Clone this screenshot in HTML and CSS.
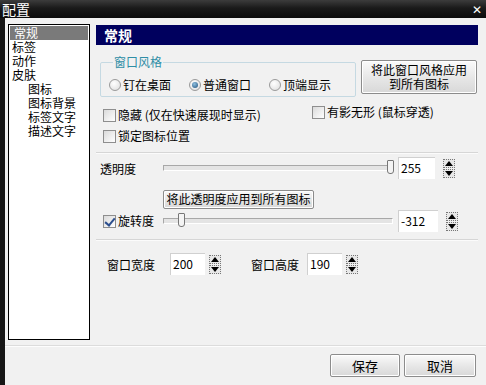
FILE: index.html
```html
<!DOCTYPE html>
<html lang="zh-CN">
<head>
  <meta charset="UTF-8">
  <title>配置</title>
  <link rel="stylesheet" href="styles.css">
</head>
<body>
<div class="window">
  <!-- 标题栏 -->
  <div class="titlebar">
    <span class="title">配置</span>
    <span class="close">✕</span>
  </div>
  <div class="frame">
    <div class="top">
      <!-- 左侧列表 -->
      <ul class="nav">
        <li class="active">常规</li>
        <li>标签</li>
        <li>动作</li>
        <li>皮肤</li>
        <li class="sub">图标</li>
        <li class="sub">图标背景</li>
        <li class="sub">标签文字</li>
        <li class="sub">描述文字</li>
      </ul>
      <!-- 右侧面板 -->
      <div class="panel">
        <div class="panel-head">常规</div>

        <div class="style-row">
          <fieldset class="group">
            <legend>窗口风格</legend>
            <label class="radio"><span class="dot"></span>钉在桌面</label>
            <label class="radio"><span class="dot on"></span>普通窗口</label>
            <label class="radio"><span class="dot"></span>顶端显示</label>
          </fieldset>
          <button class="btn btn-apply">将此窗口风格应用<br>到所有图标</button>
        </div>

        <div class="check-row">
          <div class="check-col">
            <label class="check"><span class="box"></span>隐藏 (仅在快速展现时显示)</label>
            <label class="check"><span class="box"></span>锁定图标位置</label>
          </div>
          <label class="check check-right"><span class="box"></span>有影无形 (鼠标穿透)</label>
        </div>

        <div class="sep"></div>

        <div class="slider-row">
          <span class="slider-label">透明度</span>
          <div class="track"><span class="thumb thumb-end"></span></div>
          <span class="edit">255</span>
          <span class="spin"><i class="up"></i><i class="down"></i></span>
        </div>

        <div class="apply-row">
          <button class="btn btn-alpha">将此透明度应用到所有图标</button>
        </div>

        <div class="slider-row slider-rotate">
          <label class="check slider-label"><span class="box checked"></span>旋转度</label>
          <div class="track"><span class="thumb thumb-start"></span></div>
          <span class="edit edit-wide">-312</span>
          <span class="spin"><i class="up"></i><i class="down"></i></span>
        </div>

        <div class="sep sep-lower"></div>

        <div class="size-row">
          <span class="size-label">窗口宽度</span>
          <span class="edit">200</span>
          <span class="spin"><i class="up"></i><i class="down"></i></span>
          <span class="size-label size-gap">窗口高度</span>
          <span class="edit">190</span>
          <span class="spin"><i class="up"></i><i class="down"></i></span>
        </div>
      </div>
    </div>

    <div class="footer-line"></div>
    <div class="footer">
      <button class="btn btn-foot">保存</button>
      <button class="btn btn-foot btn-cancel">取消</button>
    </div>
  </div>
</div>
</body>
</html>
```

FILE: styles.css
```css
:root {
  --bg: #f1f1f1;
  --navy: #00005e;
  --line: #d6d6d6;
  --teal: #2f8ea6;
  --dark: #161616;
}
* {
  box-sizing: border-box;
  font-family: "Noto Sans CJK SC", "DejaVu Sans", sans-serif;
}
body {
  margin: 0;
  background: var(--bg);
}
.window {
  width: 486px;
  height: 385px;
  background: var(--bg);
  overflow: hidden;
}
.titlebar {
  height: 18px;
  display: flex;
  align-items: center;
  justify-content: space-between;
  padding: 0 4px 0 2px;
  background: linear-gradient(#3c3c3c, #1a1a1a 45%, #0c0c0c);
  color: #fff;
}
.title {
  font-size: 14px;
  line-height: 18px;
}
.close {
  font-size: 12px;
  font-weight: bold;
  line-height: 18px;
}
.frame {
  height: 367px;
  border-left: 5px solid var(--dark);
  padding: 6px 8px 0 3px;
}
.top {
  display: flex;
  gap: 6px;
  height: 316px;
}

/* 左侧列表 */
.nav {
  list-style: none;
  margin: 0;
  padding: 1px;
  width: 82px;
  height: 316px;
  background: #fff;
  border: 1px solid #000;
}
.nav li {
  font-size: 12px;
  line-height: 14px;
  height: 14px;
  padding-left: 2px;
  color: #000;
}
.nav li.active {
  background: #7a7a7a;
  color: #fff;
  padding-left: 4px;
}
.nav li.sub {
  padding-left: 18px;
}

/* 右侧面板 */
.panel {
  width: 382px;
  margin-top: 1px;
}
.panel-head {
  height: 20px;
  background: var(--navy);
  color: #fff;
  font-size: 14px;
  font-weight: bold;
  line-height: 20px;
  padding-left: 8px;
}
.style-row {
  display: flex;
  align-items: flex-start;
  margin-top: 10px;
  padding-left: 4px;
}
.group {
  width: 256px;
  height: 42px;
  margin: 0;
  padding: 4px 0 0 8px;
  border: 1px solid #c5d9e2;
  border-radius: 2px;
  display: flex;
  align-items: center;
  gap: 18px;
}
.group legend {
  color: var(--teal);
  font-size: 12px;
  line-height: 14px;
  padding: 0 1px;
  margin-left: 4px;
}
.radio, .check {
  display: flex;
  align-items: center;
  gap: 2px;
  font-size: 12px;
  line-height: 14px;
  color: #000;
}
.dot {
  width: 12px;
  height: 12px;
  border-radius: 50%;
  border: 1px solid #9a9a9a;
  background: radial-gradient(circle at 40% 35%, #fff, #dcdcdc);
  position: relative;
}
.dot.on::after {
  content: "";
  position: absolute;
  left: 2px;
  top: 2px;
  width: 6px;
  height: 6px;
  border-radius: 50%;
  background: radial-gradient(circle at 40% 35%, #8fc0e0, #1d4f7a);
}
.btn {
  font-size: 12px;
  line-height: 14px;
  color: #000;
  background: linear-gradient(#fafafa, #e6e6e6 55%, #d8d8d8);
  border: 1px solid #8c8c8c;
  border-radius: 2px;
  box-shadow: inset 0 0 0 1px #fff;
  padding: 0;
}
.btn-apply {
  width: 116px;
  height: 34px;
  margin-left: 5px;
  margin-top: 5px;
}
.check-row {
  display: flex;
  align-items: flex-start;
  margin-top: 8px;
  padding-left: 7px;
}
.check-col {
  display: flex;
  flex-direction: column;
  gap: 7px;
  width: 209px;
  padding-top: 3px;
}
.box {
  width: 13px;
  height: 13px;
  border: 1px solid #8e8e8e;
  background: linear-gradient(135deg, #dadada, #fff);
  position: relative;
}
.box.checked::after {
  content: "";
  position: absolute;
  left: 3px;
  top: 0;
  width: 4px;
  height: 8px;
  border: solid #2d4f8e;
  border-width: 0 2px 2px 0;
  transform: rotate(40deg);
}
.sep {
  height: 2px;
  border-top: 1px solid var(--line);
  border-bottom: 1px solid #fbfbfb;
  margin-top: 9px;
}
.sep-lower {
  margin-top: 7px;
}
.slider-row {
  display: flex;
  align-items: center;
  height: 22px;
  margin-top: 3px;
  padding-left: 4px;
}
.slider-rotate {
  margin-top: 1px;
}
.slider-label {
  width: 63px;
  font-size: 12px;
}
.check.slider-label {
  padding-left: 3px;
}
.track {
  width: 230px;
  height: 6px;
  background: #e4e4e4;
  border: 1px solid #a8a8a8;
  border-bottom-color: #fff;
  border-right-color: #fff;
  position: relative;
}
.thumb {
  position: absolute;
  top: -6px;
  width: 7px;
  height: 14px;
  background: #f4f4f4;
  border: 1px solid #777;
  border-radius: 1px 1px 3px 3px;
}
.thumb-end {
  left: 223px;
}
.thumb-start {
  left: 14px;
}
.edit {
  width: 37px;
  height: 22px;
  margin-left: 5px;
  background: #fff;
  border-left: 1px solid #d0d0d0;
  border-top: 1px solid #d0d0d0;
  font-size: 12px;
  line-height: 20px;
  padding-left: 2px;
}
.edit-wide {
  width: 40px;
}
.spin {
  width: 12px;
  height: 20px;
  margin-left: 6px;
  display: flex;
  flex-direction: column;
  justify-content: center;
  gap: 1px;
}
.spin i {
  display: block;
  width: 12px;
  height: 9px;
  border: 1px dotted #777;
  background: #e8e8e8;
  position: relative;
}
.spin i::after {
  content: "";
  position: absolute;
  left: 1px;
  border-left: 4px solid transparent;
  border-right: 4px solid transparent;
}
.spin .up::after {
  top: 1px;
  border-bottom: 5px solid #000;
}
.spin .down::after {
  top: 1px;
  border-top: 5px solid #000;
}
.slider-row .spin {
  margin-left: 8px;
}
.apply-row {
  padding-left: 67px;
  margin-top: 6px;
}
.btn-alpha {
  width: 151px;
  height: 19px;
}
.size-row {
  display: flex;
  align-items: center;
  height: 22px;
  margin-top: 12px;
  padding-left: 11px;
}
.size-label {
  font-size: 12px;
  width: 63px;
}
.size-row .edit {
  width: 35px;
  margin-left: 0;
}
.size-row .spin {
  margin-left: 4px;
}
.size-gap {
  margin-left: 30px;
  width: 56px;
}
.footer-line {
  height: 2px;
  margin: 5px -8px 0 -3px;
  border-top: 1px solid #dcdcdc;
  border-bottom: 1px solid #fdfdfd;
}
.footer {
  display: flex;
  justify-content: flex-end;
  gap: 4px;
  margin-top: 7px;
  padding-right: 2px;
}
.btn-foot {
  width: 70px;
  height: 23px;
  font-size: 13px;
}
.btn-cancel {
  width: 72px;
}
```
